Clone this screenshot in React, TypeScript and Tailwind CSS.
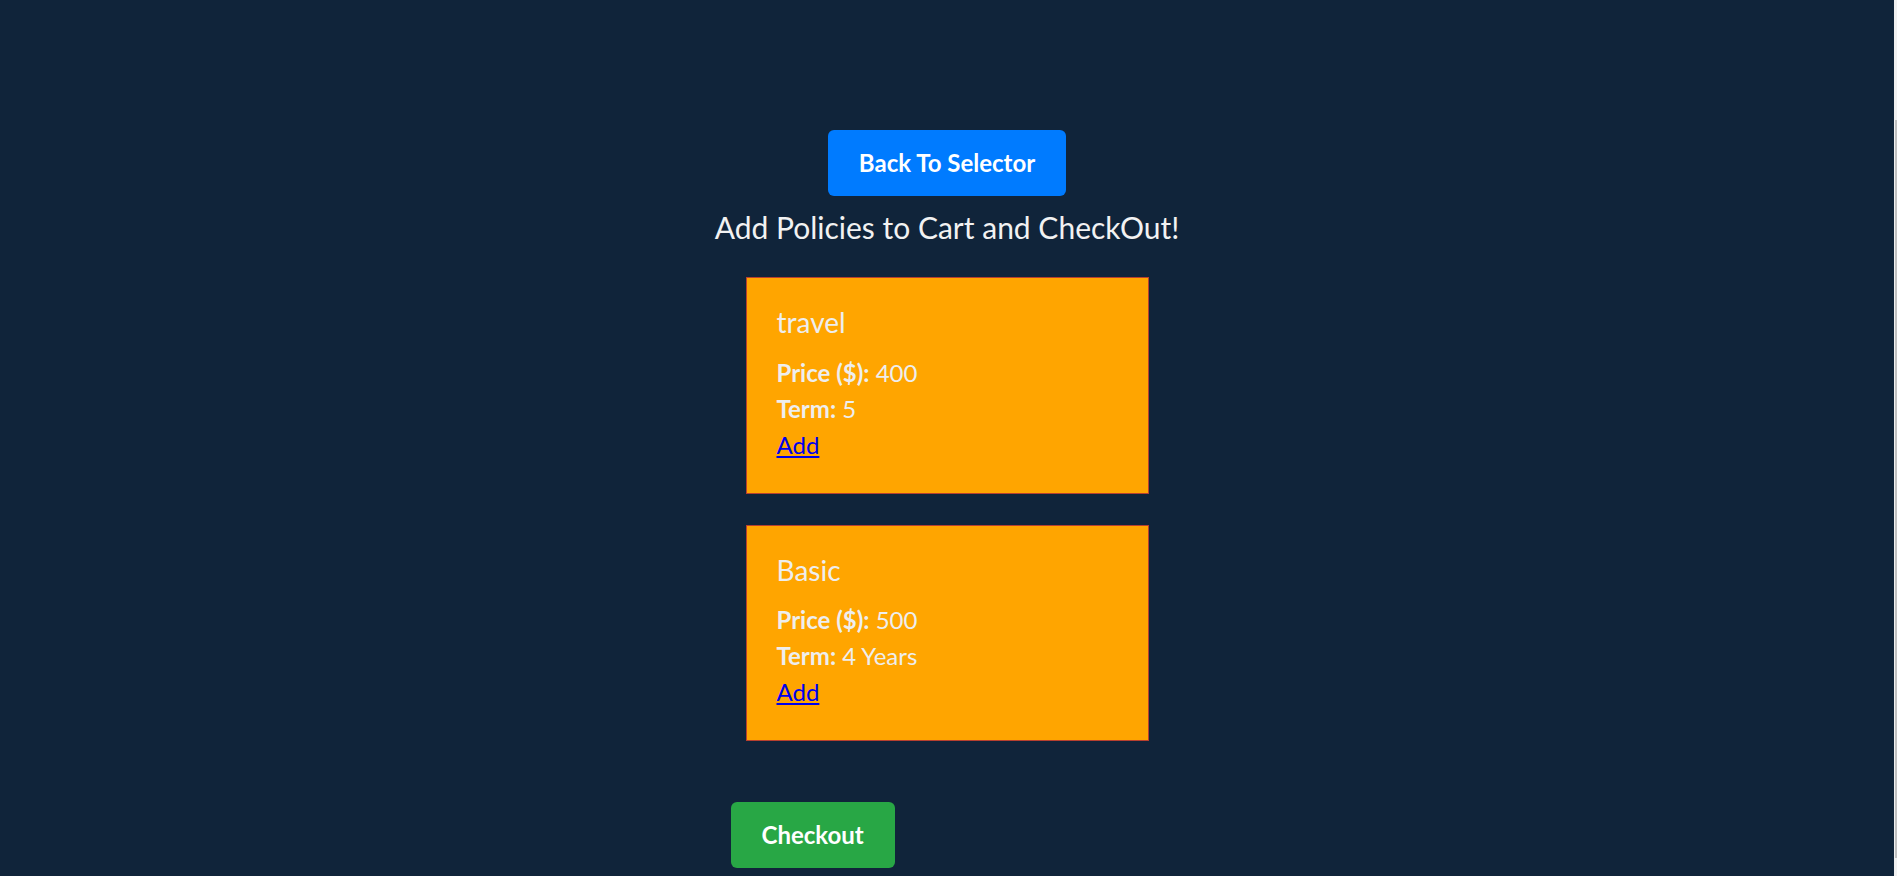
import React from "react";

const policies = [
  { name: "travel", price: 400, term: "5" },
  { name: "Basic", price: 500, term: "4 Years" },
];

function PolicyCard({ name, price, term }: { name: string; price: number; term: string }) {
  return (
    <div className="mx-[15px] border border-[#b8402f] bg-[#ffa500] px-[30px] pb-[30px] pt-[28px] text-[#eeeeee]">
      <h3 className="mb-[15px] text-[28px] leading-[1.2]">{name}</h3>
      <div className="text-[24px] leading-[36px]">
        <div>
          <span className="font-bold">Price ($):</span> {price}
        </div>
        <div>
          <span className="font-bold">Term:</span> {term}
        </div>
        <a href="#" className="text-[#0000ee] underline">
          Add
        </a>
      </div>
    </div>
  );
}

export default function App() {
  return (
    <div className="flex min-h-[876px] bg-[#10243a] font-['Lato','Noto_Sans',sans-serif]">
      <div className="flex flex-1 justify-center pt-[130px]">
        <div className="flex w-[433px] flex-col">
          <button className="mx-auto h-[66px] rounded-md bg-[#007bff] px-[31px] text-[24px] font-bold text-white">
            Back To Selector
          </button>
          <h2 className="mt-[13px] self-center whitespace-nowrap text-center text-[30px] leading-[1.2] text-[#f2f2f2]">
            Add Policies to Cart and CheckOut!
          </h2>
          <div className="mt-[32px] flex flex-col gap-[31px]">
            {policies.map((p) => (
              <PolicyCard key={p.name} {...p} />
            ))}
          </div>
          <div className="mt-[61px]">
            <button className="h-[66px] rounded-md bg-[#28a745] px-[31px] text-[24px] font-bold text-white">
              Checkout
            </button>
          </div>
        </div>
      </div>
      <div className="w-[3px] bg-[#f1f1f1]">
        <div className="ml-[1px] mt-[120px] h-[738px] w-[2px] bg-[#c1c1c1]" />
      </div>
    </div>
  );
}
